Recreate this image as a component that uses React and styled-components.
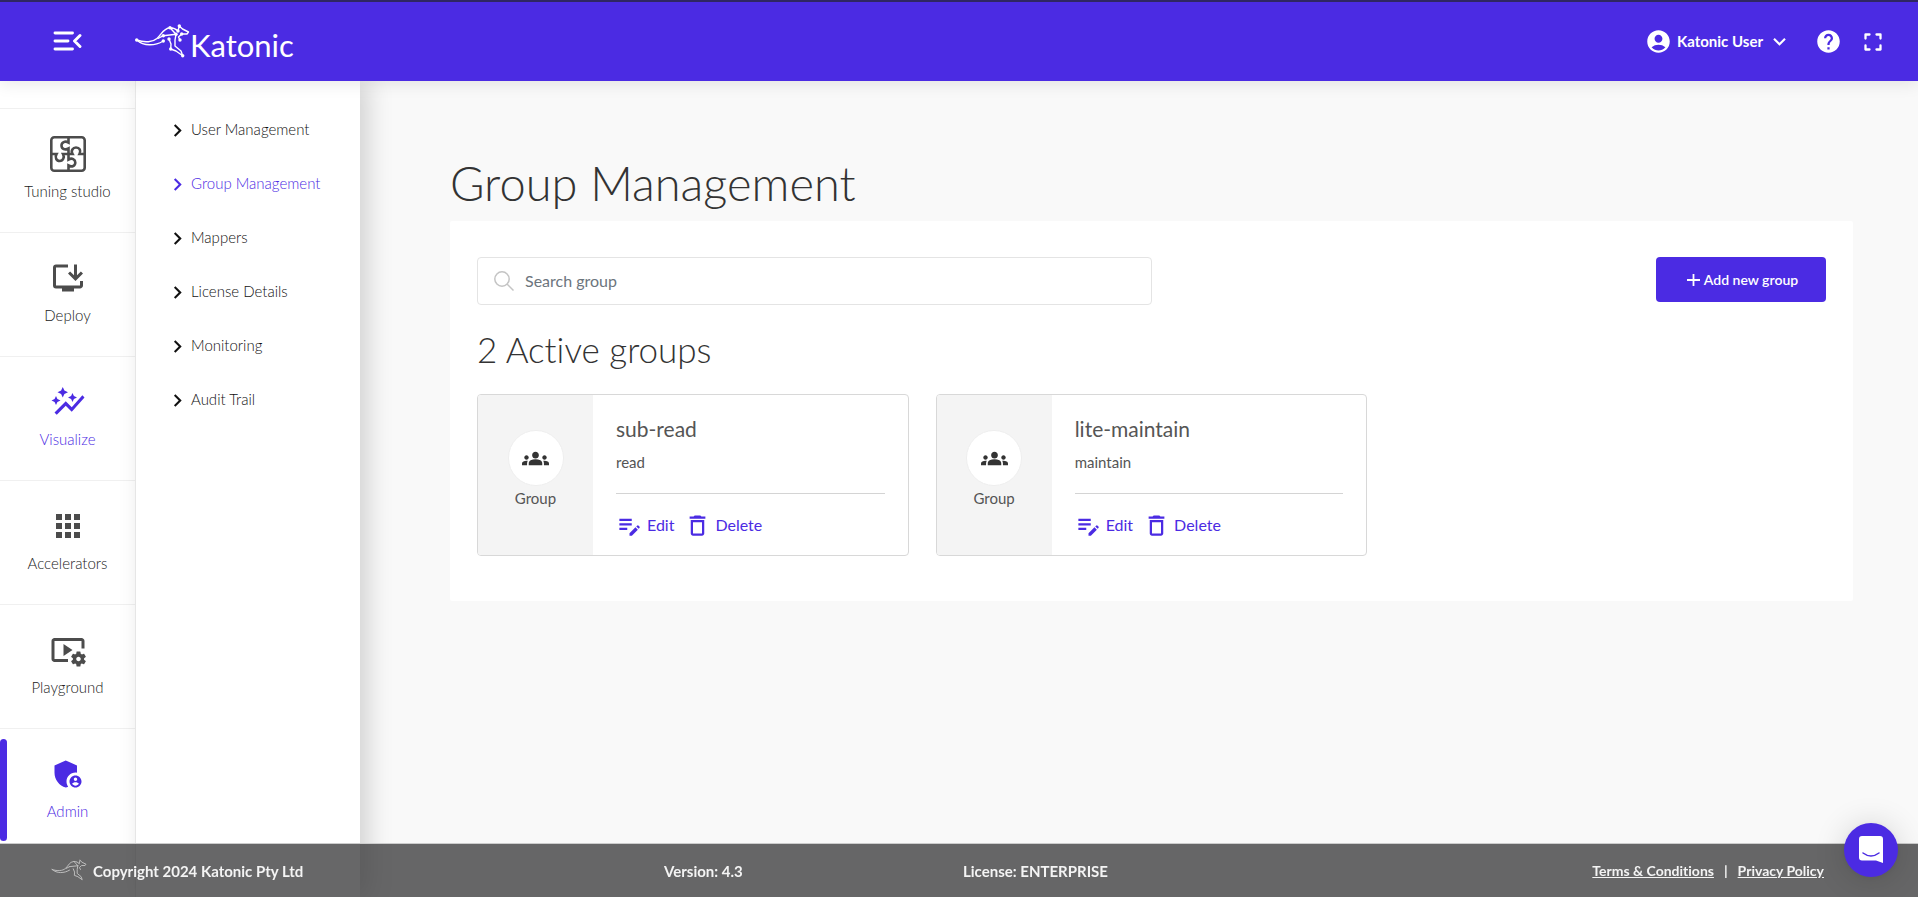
import React from 'react';
import styled, { createGlobalStyle, css } from 'styled-components';
import {
  MdInstallDesktop,
  MdAutoGraph,
  MdApps,
  MdVideoSettings,
  MdAdminPanelSettings,
  MdAccountCircle,
  MdHelp,
  MdKeyboardArrowDown,
  MdChevronRight,
  MdGroups,
  MdEditNote,
  MdDeleteOutline,
} from 'react-icons/md';

const purple = '#4b2be3';

const GlobalStyle = createGlobalStyle`
  *, *::before, *::after { box-sizing: border-box; }
  body {
    margin: 0;
    background: #f9f9f9;
    color: #333;
    font-family: Lato, "Liberation Sans", sans-serif;
    font-size: 15px;
    line-height: 20px;
    font-variant-ligatures: none;
  }
  a { color: inherit; text-decoration: none; }
  h1, h2, h3, p, ul { margin: 0; padding: 0; }
  ul { list-style: none; }
  button { font: inherit; color: inherit; background: none; border: 0; padding: 0; cursor: pointer; }
  svg { display: block; flex: none; }
`;

const Page = styled.div`
  display: flex;
  flex-direction: column;
  min-height: 100vh;
`;

const Header = styled.header`
  position: relative;
  z-index: 3;
  display: flex;
  align-items: center;
  height: 81px;
  padding: 0 36px 0 52px;
  background: ${purple};
  border-top: 2px solid #2f2663;
  color: #fff;
  box-shadow: 0 2px 16px rgba(0, 0, 0, 0.1);
`;

const Brand = styled.a`
  display: flex;
  align-items: flex-end;
  margin-left: 53px;
  padding-bottom: 1px;
`;

const Wordmark = styled.span`
  font-size: 31px;
  line-height: 26px;
`;

const HeaderTools = styled.div`
  display: flex;
  align-items: center;
  margin-left: auto;
`;

const UserButton = styled.button`
  display: flex;
  align-items: center;
  margin-right: 23px;
  font-weight: 700;
`;

const UserName = styled.span`
  padding: 0 4px 2px 5px;
`;

const ToolButton = styled.button`
  & + & { margin-left: 22px; }
`;

const Body = styled.div`
  display: flex;
  flex: 1;
`;

const Rail = styled.nav`
  flex: none;
  width: 136px;
  padding-top: 27px;
  background: #fff;
  border-right: 1px solid #f0f0f0;
`;

const RailItem = styled.a`
  position: relative;
  display: flex;
  flex-direction: column;
  align-items: center;
  gap: 9px;
  height: 124px;
  padding-top: 27px;
  border-top: 1px solid #f0f0f0;
  color: ${(p) => (p.$active ? purple : '#4c4c4c')};
  font-weight: 300;
  ${(p) =>
    p.$marked &&
    css`
      &::before {
        content: '';
        position: absolute;
        left: 0;
        top: 10px;
        width: 7px;
        height: 102px;
        border-radius: 4px;
        background: ${purple};
      }
    `}
`;

const RailLabel = styled.span`
  color: ${(p) => (p.$active ? purple : '#222')};
`;

const SubMenu = styled.nav`
  position: relative;
  z-index: 1;
  flex: none;
  width: 224px;
  padding: 21px 0 0 29px;
  background: #fff;
  box-shadow: 8px 0 24px rgba(0, 0, 0, 0.16);
`;

const SubLink = styled.a`
  display: flex;
  align-items: center;
  gap: 1px;
  height: 54px;
  color: ${(p) => (p.$active ? purple : '#111')};
  font-weight: 300;
  svg { margin-top: 2px; }
`;

const Main = styled.main`
  flex: 1;
  padding: 73px 65px 120px 90px;
`;

const Title = styled.h1`
  font-size: 47px;
  line-height: 58px;
  font-weight: 300;
`;

const Panel = styled.section`
  margin-top: 9px;
  padding: 36px 27px 45px;
  background: #fff;
  border-radius: 2px;
`;

const Toolbar = styled.div`
  display: flex;
  align-items: flex-start;
  justify-content: space-between;
`;

const SearchBox = styled.label`
  display: flex;
  align-items: center;
  gap: 11px;
  width: 50%;
  height: 48px;
  padding: 0 16px;
  border: 1px solid #e4e4e4;
  border-radius: 4px;
`;

const SearchInput = styled.input`
  flex: 1;
  min-width: 0;
  border: 0;
  outline: 0;
  padding: 0;
  background: none;
  font: inherit;
  font-size: 16px;
  &::placeholder { color: #6c757d; opacity: 1; }
`;

const AddButton = styled.button`
  display: flex;
  align-items: center;
  justify-content: center;
  gap: 4px;
  width: 170px;
  height: 45px;
  padding-left: 3px;
  border-radius: 4px;
  background: ${purple};
  color: #fff;
  font-size: 14px;
  font-weight: 600;
`;

const Subtitle = styled.h2`
  margin: 23px 0;
  font-size: 35px;
  line-height: 43px;
  font-weight: 300;
`;

const CardGrid = styled.ul`
  display: grid;
  grid-template-columns: repeat(3, 1fr);
  gap: 27px;
`;

const Card = styled.li`
  display: flex;
  height: 162px;
  border: 1px solid #d8d8d8;
  border-radius: 4px;
  overflow: hidden;
  color: #555;
`;

const CardKind = styled.div`
  display: flex;
  flex: none;
  flex-direction: column;
  align-items: center;
  gap: 2px;
  width: 115px;
  padding-top: 35px;
  background: #f4f4f4;
`;

const Avatar = styled.span`
  display: flex;
  align-items: center;
  justify-content: center;
  width: 56px;
  height: 56px;
  border: 1px solid #eee;
  border-radius: 50%;
  background: #fff;
  color: #333;
`;

const CardBody = styled.div`
  flex: 1;
  padding: 21px 23px 0;
`;

const CardTitle = styled.h3`
  font-size: 21px;
  line-height: 26px;
  font-weight: 400;
`;

const CardRole = styled.p`
  padding: 10px 0 21px;
  border-bottom: 1px solid #d4d4d4;
`;

const Actions = styled.div`
  display: flex;
  gap: 10px;
  padding-top: 18px;
`;

const Action = styled.button`
  display: flex;
  align-items: center;
  gap: 4px;
  color: ${purple};
  font-size: 16px;
  span { padding-bottom: 2px; }
`;

const Footer = styled.footer`
  position: fixed;
  left: 0;
  right: 0;
  bottom: 0;
  z-index: 4;
  display: grid;
  grid-template-columns: 613fr 299fr 200fr 661fr;
  align-items: center;
  height: 54px;
  padding: 0 94px 0 51px;
  border-top: 1px solid #ccc;
  background: rgba(52, 52, 54, 0.75);
  background-clip: padding-box;
  color: #f4f4f4;
  font-weight: 700;
`;

const Copyright = styled.span`
  display: flex;
  align-items: center;
  gap: 6px;
`;

const Legal = styled.span`
  display: flex;
  justify-content: flex-end;
  gap: 10px;
  font-size: 14px;
  a { text-decoration: underline; }
`;

const ChatButton = styled.button`
  position: fixed;
  right: 20px;
  bottom: 20px;
  z-index: 5;
  display: flex;
  align-items: center;
  justify-content: center;
  width: 54px;
  height: 54px;
  border-radius: 50%;
  background: ${purple};
  box-shadow: 0 1px 6px rgba(0, 0, 0, 0.06), 0 2px 32px rgba(0, 0, 0, 0.16);
`;

function Kangaroo({ width, color = '#fff', dots = true }) {
  const nodes = [[1.7, 16], [35, 3.7], [28.3, 11.7], [28.3, 17], [41, 10.3], [43, 7], [44.3, 2], [46.7, 10], [45, 16], [34, 15], [35.7, 25], [47.7, 31.7]];
  return (
    <svg width={width} height={(width * 34) / 55} viewBox="0 0 55 34" fill="none" stroke={color} strokeWidth="1.4" strokeLinejoin="round" strokeLinecap="round" aria-hidden="true">
      <path d="M1.7 16C10 19 18 18 22 14.500C27 10 28 4.500 35 3.700C39 3.800 41 5 43 7M35 3.700L41 10.300" />
      <path d="M44.300 2L47.500 5L53.500 8L52 10L46.700 10L43.500 13L45 16M44.300 2L43 7" />
      <path d="M1.700 16C9 22.500 20 22 28.300 17M28.300 11.700L41 10.300M28.300 11.700L23 14.500" />
      <path d="M34 15L36 20L35.700 25L41 27L47.700 31.700L46 27L40 22V16L41 10.300" />
      {dots && nodes.map(([x, y]) => <circle key={`${x}-${y}`} cx={x} cy={y} r="1.700" fill={color} stroke="none" />)}
    </svg>
  );
}

function MenuCollapseIcon() {
  return (
    <svg width="30" height="24" viewBox="0 0 30 24" fill="none" stroke="#fff" strokeWidth="2.900" strokeLinecap="round" strokeLinejoin="round">
      <path d="M3 3H20.500M3 11H16M3 19H20.500M28 5.500L22.500 11L28 16.500" />
    </svg>
  );
}

function FullscreenIcon() {
  return (
    <svg width="18" height="18" viewBox="0 0 18 18" fill="none" stroke="#fff" strokeWidth="2.300" strokeLinecap="round" strokeLinejoin="round">
      <path d="M1.500 5.500V1.500H5.500M12.500 1.500H16.500V5.500M16.500 12.500V16.500H12.500M5.500 16.500H1.500V12.500" />
    </svg>
  );
}

function PuzzleIcon() {
  return (
    <svg width="36" height="36" viewBox="0 0 36 36" fill="none" stroke="currentColor" strokeWidth="2.600">
      <rect x="1.300" y="1.300" width="33.400" height="33.400" rx="3" />
      <path d="M18.500 1V6.500C15 4.500 11.500 6.500 11.500 9.500C11.500 13 15 14.500 18.500 12.500V18" />
      <path d="M1 18H6.500C4.500 21.500 6.500 25 9.800 25C13 25 14.800 21.500 13 18H22.500C20.500 14.500 23 11.500 26 11.500C29.500 11.500 31.300 14.500 29.500 18H35" />
      <path d="M18.500 18V23.500C22 21.500 25.300 23.500 25.300 26.500C25.300 29.800 22 31.500 18.500 29.500V35" />
    </svg>
  );
}

function SearchIcon() {
  return (
    <svg width="20" height="20" viewBox="0 0 20 20" fill="none" stroke="#c4c4c4" strokeWidth="1.500">
      <circle cx="8" cy="8" r="7.200" />
      <path d="M13 13L19.500 19.500" />
    </svg>
  );
}

function PlusIcon() {
  return (
    <svg width="13" height="12" viewBox="0 0 13 12" stroke="#fff" strokeWidth="1.800">
      <path d="M0 6H13M6.500 0V12" />
    </svg>
  );
}

function ChatIcon() {
  return (
    <svg width="26" height="28" viewBox="0 0 26 28">
      <path d="M4 0H22Q25 0 25 3V27L18 24.500H4Q1 24.500 1 21.500V3Q1 0 4 0Z" fill="#fff" />
      <path d="M5 17Q13 23 21 17" fill="none" stroke={purple} strokeWidth="1.500" strokeLinecap="round" />
    </svg>
  );
}

const railItems = [
  { label: 'Tuning studio', icon: <PuzzleIcon /> },
  { label: 'Deploy', icon: <MdInstallDesktop size={36} /> },
  { label: 'Visualize', icon: <MdAutoGraph size={36} />, active: true },
  { label: 'Accelerators', icon: <MdApps size={36} /> },
  { label: 'Playground', icon: <MdVideoSettings size={36} /> },
  { label: 'Admin', icon: <MdAdminPanelSettings size={36} />, active: true, marked: true },
];

const subLinks = ['User Management', 'Group Management', 'Mappers', 'License Details', 'Monitoring', 'Audit Trail'];

const groups = [
  { name: 'sub-read', role: 'read' },
  { name: 'lite-maintain', role: 'maintain' },
];

export default function App() {
  return (
    <Page>
      <GlobalStyle />
      <Header>
        <button type="button" aria-label="Collapse menu"><MenuCollapseIcon /></button>
        <Brand href="#">
          <Kangaroo width={55} />
          <Wordmark>Katonic</Wordmark>
        </Brand>
        <HeaderTools>
          <UserButton type="button">
            <MdAccountCircle size={27} />
            <UserName>Katonic User</UserName>
            <MdKeyboardArrowDown size={25} />
          </UserButton>
          <ToolButton type="button" aria-label="Help"><MdHelp size={27} /></ToolButton>
          <ToolButton type="button" aria-label="Full screen"><FullscreenIcon /></ToolButton>
        </HeaderTools>
      </Header>
      <Body>
        <Rail>
          {railItems.map((item) => (
            <RailItem key={item.label} href="#" $active={item.active} $marked={item.marked}>
              {item.icon}
              <RailLabel $active={item.active}>{item.label}</RailLabel>
            </RailItem>
          ))}
        </Rail>
        <SubMenu>
          {subLinks.map((label) => (
            <SubLink key={label} href="#" $active={label === 'Group Management'}>
              <MdChevronRight size={25} />
              {label}
            </SubLink>
          ))}
        </SubMenu>
        <Main>
          <Title>Group Management</Title>
          <Panel>
            <Toolbar>
              <SearchBox>
                <SearchIcon />
                <SearchInput type="text" placeholder="Search group" aria-label="Search group" />
              </SearchBox>
              <AddButton type="button"><PlusIcon />Add new group</AddButton>
            </Toolbar>
            <Subtitle>2 Active groups</Subtitle>
            <CardGrid>
              {groups.map((group) => (
                <Card key={group.name}>
                  <CardKind>
                    <Avatar><MdGroups size={27} /></Avatar>
                    Group
                  </CardKind>
                  <CardBody>
                    <CardTitle>{group.name}</CardTitle>
                    <CardRole>{group.role}</CardRole>
                    <Actions>
                      <Action type="button"><MdEditNote size={27} /><span>Edit</span></Action>
                      <Action type="button"><MdDeleteOutline size={27} /><span>Delete</span></Action>
                    </Actions>
                  </CardBody>
                </Card>
              ))}
            </CardGrid>
          </Panel>
        </Main>
      </Body>
      <Footer>
        <Copyright><Kangaroo width={36} color="#c4c4c4" dots={false} />Copyright 2024 Katonic Pty Ltd</Copyright>
        <span>Version: 4.3</span>
        <span>License: ENTERPRISE</span>
        <Legal>
          <a href="#">Terms &amp; Conditions</a>
          <span>|</span>
          <a href="#">Privacy Policy</a>
        </Legal>
      </Footer>
      <ChatButton type="button" aria-label="Open chat"><ChatIcon /></ChatButton>
    </Page>
  );
}
